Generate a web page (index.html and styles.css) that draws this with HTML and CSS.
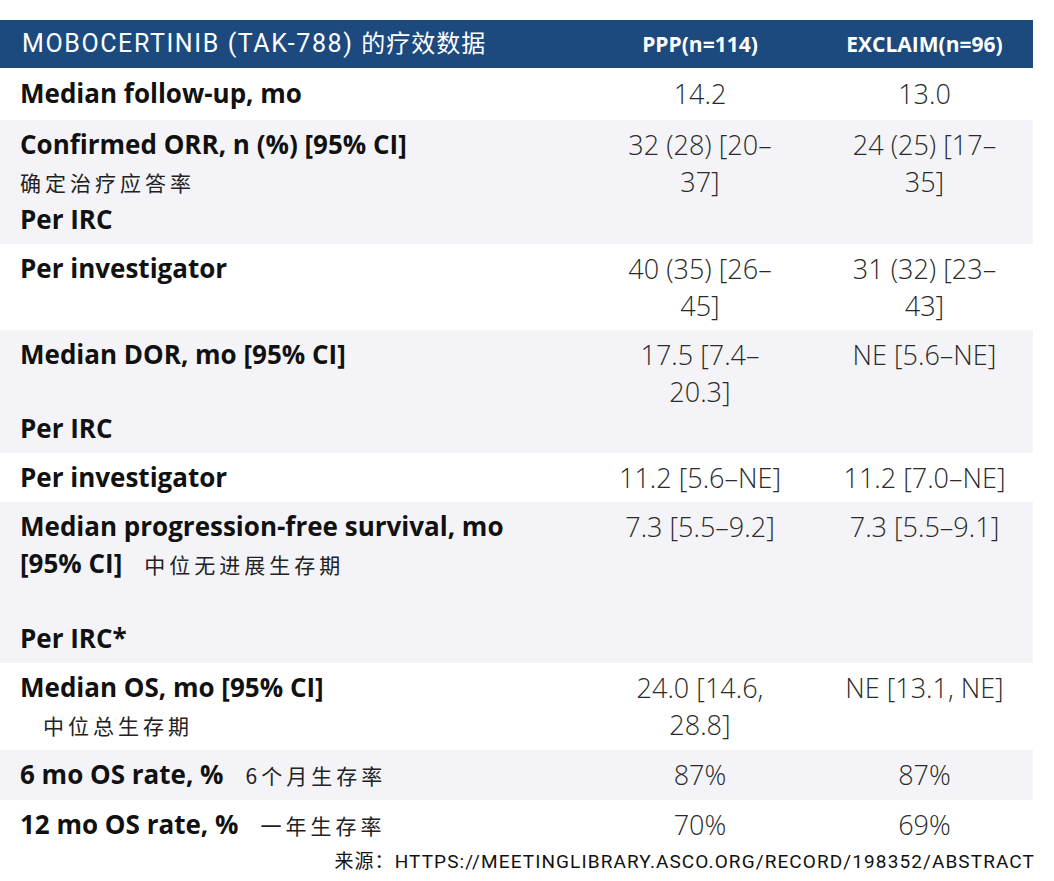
FILE: index.html
```html
<!DOCTYPE html>
<html lang="zh-CN">
<head>
<meta charset="utf-8">
<title>MOBOCERTINIB (TAK-788) 的疗效数据</title>
<link rel="stylesheet" href="styles.css">
</head>
<body>
<div class="table">
  <div class="row head">
    <div class="title">MOBOCERTINIB (TAK-788) <span class="title-cn">的疗效数据</span></div>
    <div class="col">PPP(n=114)</div>
    <div class="col col3">EXCLAIM(n=96)</div>
  </div>
  <div class="row first">
    <div class="lbl">Median follow-up, mo</div>
    <div class="val">14.2</div>
    <div class="val col3">13.0</div>
  </div>
  <div class="row alt">
    <div class="lbl">Confirmed ORR, n (%) [95% CI]<br><span class="cn cnline">确定治疗应答率</span><br>Per IRC</div>
    <div class="val">32 (28) [20–<br>37]</div>
    <div class="val col3">24 (25) [17–<br>35]</div>
  </div>
  <div class="row">
    <div class="lbl">Per investigator</div>
    <div class="val">40 (35) [26–<br>45]</div>
    <div class="val col3">31 (32) [23–<br>43]</div>
  </div>
  <div class="row alt">
    <div class="lbl">Median DOR, mo [95% CI]<br>&nbsp;<br>Per IRC</div>
    <div class="val">17.5 [7.4–<br>20.3]</div>
    <div class="val col3">NE [5.6–NE]</div>
  </div>
  <div class="row">
    <div class="lbl">Per investigator</div>
    <div class="val">11.2 [5.6–NE]</div>
    <div class="val col3">11.2 [7.0–NE]</div>
  </div>
  <div class="row alt">
    <div class="lbl">Median progression-free survival, mo<br>[95% CI]<span class="cn gap">中位无进展生存期</span><br>&nbsp;<br>Per IRC*</div>
    <div class="val">7.3 [5.5–9.2]</div>
    <div class="val col3">7.3 [5.5–9.1]</div>
  </div>
  <div class="row">
    <div class="lbl">Median OS, mo [95% CI]<br><span class="cn indent">中位总生存期</span></div>
    <div class="val">24.0 [14.6,<br>28.8]</div>
    <div class="val col3">NE [13.1, NE]</div>
  </div>
  <div class="row alt">
    <div class="lbl">6 mo OS rate, %<span class="cn gap">6个月生存率</span></div>
    <div class="val">87%</div>
    <div class="val col3">87%</div>
  </div>
  <div class="row">
    <div class="lbl">12 mo OS rate, %<span class="cn gap">一年生存率</span></div>
    <div class="val">70%</div>
    <div class="val col3">69%</div>
  </div>
</div>
<p class="source">来源：HTTPS://MEETINGLIBRARY.ASCO.ORG/RECORD/198352/ABSTRACT</p>
</body>
</html>
```

FILE: styles.css
```css
html, body {
  margin: 0;
  padding: 0;
  background: #ffffff;
}

body {
  font-family: "Open Sans", "Noto Sans CJK SC", sans-serif;
  color: #111;
  padding-top: 20px;
}

.table {
  width: 1033px;
}

.row {
  display: grid;
  grid-template-columns: 1fr 222px 222px;
  padding: 6px 0 6px;
  line-height: 37px;
  background: #ffffff;
}

.row.first {
  padding: 7px 0 8px;
}

.row.alt {
  background: #f4f4f8;
}

.row.head {
  background: #1c4a7f;
  color: #ffffff;
  padding: 5px 0;
  align-items: center;
}

.title {
  padding-left: 22px;
  font-family: "Roboto", "Noto Sans CJK SC", sans-serif;
  font-size: 25px;
  letter-spacing: 1.6px;
  font-weight: 400;
}

.title-cn {
  font-size: 24px;
  letter-spacing: 1px;
}

.col {
  text-align: center;
  font-weight: 700;
  font-size: 21px;
}

.col3 {
  padding-left: 5px;
}

.lbl {
  padding-left: 20px;
  font-size: 26px;
  font-weight: 700;
  color: #111;
}

.val {
  text-align: center;
  font-size: 27px;
  font-weight: 300;
  color: #2a2a2a;
}

.cn {
  font-family: "Noto Sans CJK SC", sans-serif;
  font-size: 21px;
  font-weight: 400;
  letter-spacing: 4px;
  color: #222;
}

.gap {
  padding-left: 22px;
}

.indent {
  padding-left: 23px;
}

.source {
  margin: 0;
  width: 1035px;
  text-align: right;
  font-family: "Roboto", "Noto Sans CJK SC", sans-serif;
  font-size: 19px;
  letter-spacing: 1.1px;
  color: #111;
  line-height: 24px;
}
```
